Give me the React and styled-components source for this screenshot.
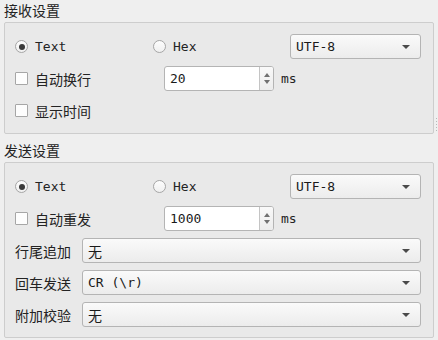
import React from 'react';
import styled, { createGlobalStyle } from 'styled-components';

const GlobalStyle = createGlobalStyle`
  html, body {
    margin: 0;
    padding: 0;
    background: #efefef;
  }
  body {
    font-family: "DejaVu Sans Mono", "Noto Sans CJK SC", monospace;
    font-size: 13px;
    color: #232323;
  }
`;

const cjk = `"DejaVu Sans", "Noto Sans CJK SC", sans-serif`;

const Page = styled.div`
  width: 438px;
  height: 340px;
  box-sizing: border-box;
  padding: 0 4px;
  position: relative;
  overflow: hidden;
`;

const GroupTitle = styled.div`
  font-family: ${cjk};
  font-size: 14px;
  height: 22px;
  line-height: 22px;
  margin-top: ${(p) => p.$top || 0}px;
`;

const Frame = styled.div`
  width: 430px;
  box-sizing: border-box;
  border: 1px solid #cdcdcd;
  border-radius: 2px;
  background: #e9e9e9;
  padding: 11px 12px 10px 10px;
  display: flex;
  flex-direction: column;
  gap: 7px;
`;

const Row = styled.div`
  display: flex;
  align-items: center;
  height: 25px;
`;

const Cell = styled.div`
  width: ${(p) => p.$w}px;
  flex: none;
  display: flex;
  align-items: center;
`;

const RadioCircle = styled.span`
  width: 13px;
  height: 13px;
  box-sizing: border-box;
  border-radius: 50%;
  border: 1px solid #a6a6a6;
  background: linear-gradient(#fdfdfd, #f0f0f0);
  display: inline-flex;
  align-items: center;
  justify-content: center;
  margin-right: 7px;
  &::after {
    content: '';
    width: 6px;
    height: 6px;
    border-radius: 50%;
    background: #3a3a3a;
    display: ${(p) => (p.$on ? 'block' : 'none')};
  }
`;

const CheckBox = styled.span`
  width: 13px;
  height: 13px;
  box-sizing: border-box;
  border: 1px solid #a6a6a6;
  border-radius: 1px;
  background: #fdfdfd;
  margin-right: 7px;
`;

const Label = styled.span`
  font-family: ${(p) => (p.$cjk ? cjk : 'inherit')};
  font-size: ${(p) => (p.$cjk ? 14 : 13)}px;
  white-space: pre;
`;

const Combo = styled.div`
  width: ${(p) => p.$w}px;
  height: 25px;
  box-sizing: border-box;
  border: 1px solid #b4b4b4;
  border-radius: 3px;
  background: linear-gradient(#fafafa, #ececec);
  display: flex;
  align-items: center;
  padding: 0 8px 0 5px;
  margin-left: auto;
`;

const ComboText = styled.span`
  flex: 1;
  font-family: ${(p) => (p.$cjk ? cjk : 'inherit')};
  font-size: ${(p) => (p.$cjk ? 14 : 13)}px;
  color: #1a1a1a;
  white-space: pre;
`;

const Arrow = styled.span`
  width: 0;
  height: 0;
  border-left: 4px solid transparent;
  border-right: 4px solid transparent;
  border-top: 4px solid #4a4a4a;
  margin-right: 2px;
`;

const Spin = styled.div`
  width: 110px;
  height: 25px;
  box-sizing: border-box;
  border: 1px solid #b4b4b4;
  border-radius: 3px;
  background: #ffffff;
  display: flex;
  margin-right: 7px;
`;

const SpinText = styled.span`
  flex: 1;
  padding-left: 5px;
  line-height: 23px;
  font-size: 13px;
  color: #1a1a1a;
`;

const SpinButtons = styled.div`
  width: 13px;
  border-left: 1px solid #c4c4c4;
  background: linear-gradient(#f9f9f9, #ececec);
  border-radius: 0 2px 2px 0;
  display: flex;
  flex-direction: column;
  align-items: center;
  justify-content: center;
  gap: 3px;
`;

const SpinArrow = styled.span`
  width: 0;
  height: 0;
  border-left: 3.5px solid transparent;
  border-right: 3.5px solid transparent;
  ${(p) => (p.$up ? 'border-bottom: 4px solid #707070;' : 'border-top: 4px solid #707070;')}
`;

const Grip = styled.div`
  position: absolute;
  right: 1px;
  top: 118px;
  width: 1px;
  height: 14px;
  background: repeating-linear-gradient(#b8b8b8 0 1px, transparent 1px 3px);
`;

const Radio = ({ on, children }) => (
  <>
    <RadioCircle $on={on} />
    <Label>{children}</Label>
  </>
);

const Check = ({ children }) => (
  <>
    <CheckBox />
    <Label $cjk>{children}</Label>
  </>
);

const SpinBox = ({ value }) => (
  <Spin>
    <SpinText>{value}</SpinText>
    <SpinButtons>
      <SpinArrow $up />
      <SpinArrow />
    </SpinButtons>
  </Spin>
);

const ComboBox = ({ w, cjkText, children }) => (
  <Combo $w={w}>
    <ComboText $cjk={cjkText}>{children}</ComboText>
    <Arrow />
  </Combo>
);

const ModeRow = () => (
  <Row>
    <Cell $w={138}>
      <Radio on>Text</Radio>
    </Cell>
    <Cell $w={137}>
      <Radio>Hex</Radio>
    </Cell>
    <ComboBox w={131}>UTF-8</ComboBox>
  </Row>
);

const IntervalRow = ({ label, value }) => (
  <Row>
    <Cell $w={149}>
      <Check>{label}</Check>
    </Cell>
    <SpinBox value={value} />
    <Label>ms</Label>
  </Row>
);

const SelectRow = ({ label, value, cjkValue }) => (
  <Row>
    <Cell $w={67}>
      <Label $cjk>{label}</Label>
    </Cell>
    <ComboBox w={339} cjkText={cjkValue}>{value}</ComboBox>
  </Row>
);

export default function App() {
  return (
    <>
      <GlobalStyle />
      <Page>
        <GroupTitle>接收设置</GroupTitle>
        <Frame>
          <ModeRow />
          <IntervalRow label="自动换行" value="20" />
          <Row>
            <Cell $w={149}>
              <Check>显示时间</Check>
            </Cell>
          </Row>
        </Frame>
        <Grip />
        <GroupTitle $top={6}>发送设置</GroupTitle>
        <Frame>
          <ModeRow />
          <IntervalRow label="自动重发" value="1000" />
          <SelectRow label="行尾追加" value="无" cjkValue />
          <SelectRow label="回车发送" value="CR (\r)" />
          <SelectRow label="附加校验" value="无" cjkValue />
        </Frame>
      </Page>
    </>
  );
}
